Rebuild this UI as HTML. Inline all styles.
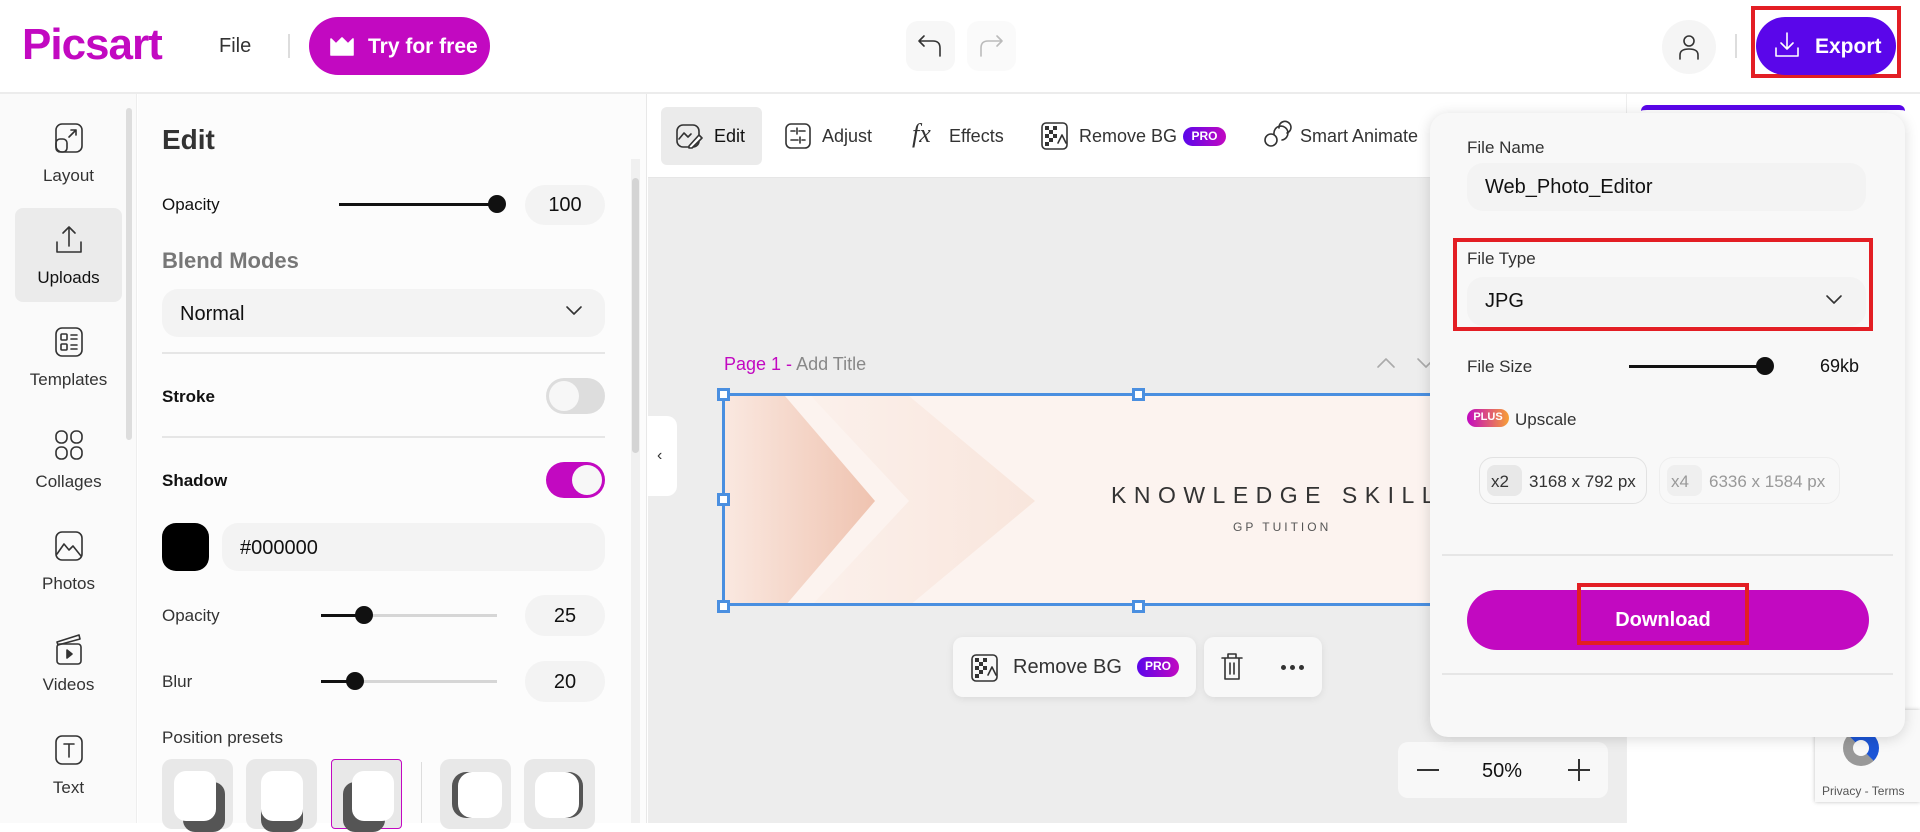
<!DOCTYPE html>
<html><head><meta charset="utf-8"><style>
*{box-sizing:border-box;margin:0;padding:0}
body{width:1920px;height:823px;overflow:hidden;background:#fff;font-family:"Liberation Sans",sans-serif;color:#111;position:relative}
.a{position:absolute}
.t{position:absolute;white-space:nowrap}
svg{position:absolute;fill:none;stroke:#333;stroke-width:1.6;stroke-linecap:round;stroke-linejoin:round}
.lab{font-size:17px;color:#333;text-align:center;width:137px;left:0}
.box{background:#f3f3f3;border-radius:20px}
</style></head><body>
<!-- header -->
<div class="a" style="left:0;top:92px;width:1920px;height:2px;background:#ececec"></div>
<div class="t" style="left:22px;top:20px;font-size:44px;font-weight:bold;color:#c209c1;letter-spacing:-1px">Picsart</div>
<div class="t" style="left:219px;top:35px;font-size:20px;color:#333">File</div>
<div class="a" style="left:288px;top:34px;width:2px;height:24px;background:#ddd"></div>
<div class="a" style="left:309px;top:17px;width:181px;height:58px;border-radius:29px;background:#c209c1"></div>
<svg style="left:329px;top:35px" width="26" height="22" viewBox="0 0 26 22"><path d="M2 4 L7 9 L13 3 L19 9 L24 4 V20 H2Z" fill="#fff" stroke="#fff"/></svg>
<div class="t" style="left:368px;top:35px;font-size:21px;font-weight:bold;color:#fff">Try for free</div>
<div class="a" style="left:906px;top:21px;width:49px;height:50px;border-radius:12px;background:#f7f7f7"></div>
<svg style="left:916px;top:32px" width="28" height="28" viewBox="0 0 28 28"><path d="M8 4 L3 9 L8 14 M3 9 H17 Q24 9 24 16 V24"/></svg>
<div class="a" style="left:967px;top:21px;width:49px;height:50px;border-radius:12px;background:#fafafa"></div>
<svg style="left:977px;top:32px" width="28" height="28" viewBox="0 0 28 28"><path d="M20 4 L25 9 L20 14 M25 9 H11 Q4 9 4 16 V24" stroke="#bbb"/></svg>
<div class="a" style="left:1662px;top:20px;width:54px;height:54px;border-radius:50%;background:#f5f5f5"></div>
<svg style="left:1677px;top:33px" width="24" height="28" viewBox="0 0 24 28"><circle cx="12" cy="8" r="5"/><path d="M3 26 V22 Q3 16 12 16 Q21 16 21 22 V26"/></svg>
<div class="a" style="left:1735px;top:34px;width:2px;height:24px;background:#ddd"></div>
<div class="a" style="left:1751px;top:6px;width:150px;height:72px;border:4px solid #e31e24"></div>
<div class="a" style="left:1756px;top:17px;width:140px;height:58px;border-radius:29px;background:#5a06ea"></div>
<svg style="left:1773px;top:30px" width="28" height="30" viewBox="0 0 28 30" ><path d="M14 3 V19 M8 13 L14 19 L20 13 M3 18 V26 H25 V18" stroke="#fff"/></svg>
<div class="t" style="left:1815px;top:35px;font-size:21px;font-weight:bold;color:#fff">Export</div>

<!-- left sidebar -->
<div class="a" style="left:0;top:94px;width:137px;height:729px;background:#fafafa;border-right:1px solid #eee"></div>
<div class="a" style="left:126px;top:108px;width:6px;height:332px;border-radius:3px;background:#ddd"></div>
<svg style="left:54px;top:122px" width="30" height="32" viewBox="0 0 30 32"><rect x="2" y="2" width="26" height="28" rx="6"/><rect x="2" y="17" width="11" height="13" rx="4"/><path d="M15 15 L22 8 M17 8 H22 V13"/></svg>
<div class="t lab" style="top:166px">Layout</div>
<div class="a" style="left:15px;top:208px;width:107px;height:94px;border-radius:8px;background:#ebebeb"></div>
<svg style="left:54px;top:224px" width="30" height="32" viewBox="0 0 30 32"><path d="M15 3 V22 M9 9 L15 3 L21 9 M3 18 V28 H27 V18"/></svg>
<div class="t lab" style="top:268px;color:#111">Uploads</div>
<svg style="left:54px;top:326px" width="30" height="32" viewBox="0 0 30 32"><rect x="2" y="2" width="26" height="28" rx="6"/><rect x="7" y="8" width="6" height="6" rx="1"/><rect x="7" y="18" width="6" height="6" rx="1"/><path d="M17 9 H23 M17 13 H23 M17 19 H23 M17 23 H23"/></svg>
<div class="t lab" style="top:370px">Templates</div>
<svg style="left:54px;top:429px" width="30" height="32" viewBox="0 0 30 32"><rect x="2" y="2" width="11" height="12" rx="5"/><rect x="17" y="2" width="11" height="12" rx="5"/><rect x="2" y="18" width="11" height="12" rx="5"/><rect x="17" y="18" width="11" height="12" rx="5"/></svg>
<div class="t lab" style="top:472px">Collages</div>
<svg style="left:54px;top:530px" width="30" height="32" viewBox="0 0 30 32"><rect x="2" y="2" width="26" height="28" rx="6"/><path d="M3 24 L10 14 L15 20 L19 16 L27 26"/></svg>
<div class="t lab" style="top:574px">Photos</div>
<svg style="left:54px;top:632px" width="30" height="34" viewBox="0 0 30 34"><rect x="3" y="12" width="24" height="20" rx="3"/><path d="M3 10 L25 3 L26 7 L4 13Z"/><path d="M13 18 L18 22 L13 26Z" fill="#333"/></svg>
<div class="t lab" style="top:675px">Videos</div>
<svg style="left:54px;top:734px" width="30" height="32" viewBox="0 0 30 32"><rect x="2" y="2" width="26" height="28" rx="6"/><path d="M10 10 H20 M15 10 V23"/></svg>
<div class="t lab" style="top:778px">Text</div>

<!-- edit panel -->
<div class="a" style="left:138px;top:94px;width:509px;height:729px;background:#fcfcfc;border-right:1px solid #e8e8e8"></div>
<div class="a" style="left:631px;top:159px;width:9px;height:664px;background:#f0f0f0"></div>
<div class="a" style="left:632px;top:178px;width:7px;height:275px;border-radius:4px;background:#d4d4d4"></div>
<div class="t" style="left:162px;top:124px;font-size:28px;font-weight:bold;color:#333">Edit</div>
<div class="t" style="left:162px;top:195px;font-size:17px">Opacity</div>
<div class="a" style="left:339px;top:203px;width:158px;height:3px;background:#111"></div>
<div class="a" style="left:488px;top:195px;width:18px;height:18px;border-radius:50%;background:#111"></div>
<div class="a box" style="left:525px;top:185px;width:80px;height:40px"></div>
<div class="t" style="left:525px;top:194px;width:80px;text-align:center;font-size:20px">100</div>
<div class="t" style="left:162px;top:248px;font-size:22px;font-weight:bold;color:#777">Blend Modes</div>
<div class="a box" style="left:162px;top:289px;width:443px;height:48px;border-radius:16px"></div>
<div class="t" style="left:180px;top:303px;font-size:20px">Normal</div>
<svg style="left:564px;top:304px" width="20" height="14" viewBox="0 0 20 14"><path d="M3 3 L10 10 L17 3"/></svg>
<div class="a" style="left:162px;top:352px;width:443px;height:2px;background:#e6e6e6"></div>
<div class="t" style="left:162px;top:387px;font-size:17px;font-weight:bold">Stroke</div>
<div class="a" style="left:546px;top:378px;width:59px;height:36px;border-radius:18px;background:#ddd"></div>
<div class="a" style="left:549px;top:381px;width:30px;height:30px;border-radius:50%;background:#f7f7f7"></div>
<div class="a" style="left:162px;top:436px;width:443px;height:2px;background:#e6e6e6"></div>
<div class="t" style="left:162px;top:471px;font-size:17px;font-weight:bold">Shadow</div>
<div class="a" style="left:546px;top:462px;width:59px;height:36px;border-radius:18px;background:#c209c1"></div>
<div class="a" style="left:572px;top:465px;width:30px;height:30px;border-radius:50%;background:#f7f7f7"></div>
<div class="a" style="left:162px;top:523px;width:47px;height:48px;border-radius:14px;background:#000"></div>
<div class="a box" style="left:222px;top:523px;width:383px;height:48px;border-radius:16px"></div>
<div class="t" style="left:240px;top:537px;font-size:20px">#000000</div>
<div class="t" style="left:162px;top:606px;font-size:17px;color:#333">Opacity</div>
<div class="a" style="left:321px;top:614px;width:176px;height:3px;background:#d6d6d6"></div>
<div class="a" style="left:321px;top:614px;width:43px;height:3px;background:#111"></div>
<div class="a" style="left:355px;top:606px;width:18px;height:18px;border-radius:50%;background:#111"></div>
<div class="a box" style="left:525px;top:595px;width:80px;height:41px"></div>
<div class="t" style="left:525px;top:605px;width:80px;text-align:center;font-size:20px">25</div>
<div class="t" style="left:162px;top:672px;font-size:17px;color:#333">Blur</div>
<div class="a" style="left:321px;top:680px;width:176px;height:3px;background:#d6d6d6"></div>
<div class="a" style="left:321px;top:680px;width:34px;height:3px;background:#111"></div>
<div class="a" style="left:346px;top:672px;width:18px;height:18px;border-radius:50%;background:#111"></div>
<div class="a box" style="left:525px;top:661px;width:80px;height:41px"></div>
<div class="t" style="left:525px;top:671px;width:80px;text-align:center;font-size:20px">20</div>
<div class="t" style="left:162px;top:728px;font-size:17px;color:#333">Position presets</div>
<div class="a" style="left:162px;top:759px;width:71px;height:70px;border-radius:10px;background:#e8e8e8"></div>
<div class="a" style="left:183px;top:782px;width:42px;height:50px;border-radius:12px;background:#555"></div>
<div class="a" style="left:174px;top:771px;width:42px;height:50px;border-radius:12px;background:#fff"></div>
<div class="a" style="left:246px;top:759px;width:71px;height:70px;border-radius:10px;background:#e8e8e8"></div>
<div class="a" style="left:261px;top:782px;width:42px;height:50px;border-radius:12px;background:#555"></div>
<div class="a" style="left:261px;top:771px;width:42px;height:50px;border-radius:12px;background:#fff"></div>
<div class="a" style="left:331px;top:759px;width:71px;height:70px;border-radius:4px;background:#e8e8e8;border:1px solid #c209c1"></div>
<div class="a" style="left:343px;top:782px;width:42px;height:50px;border-radius:12px;background:#555"></div>
<div class="a" style="left:352px;top:771px;width:42px;height:50px;border-radius:12px;background:#fff"></div>
<div class="a" style="left:421px;top:762px;width:1px;height:61px;background:#ddd"></div>
<div class="a" style="left:440px;top:759px;width:71px;height:70px;border-radius:10px;background:#e8e8e8"></div>
<div class="a" style="left:452px;top:772px;width:46px;height:46px;border-radius:14px;background:#555"></div>
<div class="a" style="left:458px;top:772px;width:44px;height:46px;border-radius:14px;background:#fff"></div>
<div class="a" style="left:524px;top:759px;width:71px;height:70px;border-radius:10px;background:#e8e8e8"></div>
<div class="a" style="left:537px;top:772px;width:46px;height:46px;border-radius:14px;background:#555"></div>
<div class="a" style="left:535px;top:772px;width:44px;height:46px;border-radius:14px;background:#fff"></div>

<!-- canvas area -->
<div class="a" style="left:648px;top:94px;width:978px;height:729px;background:#ededed"></div>
<div class="a" style="left:648px;top:94px;width:978px;height:84px;background:#fff;border-bottom:1px solid #e6e6e6"></div>
<div class="a" style="left:661px;top:107px;width:101px;height:58px;border-radius:6px;background:#ebebeb"></div>
<svg style="left:675px;top:122px" width="28" height="28" viewBox="0 0 28 28"><rect x="2" y="3" width="22" height="22" rx="6"/><path d="M4 17 L9 11 L13 15 L16 12" /><path d="M14 24 L24 13 L27 16 L17 26 H14Z" fill="#fff"/></svg>
<div class="t" style="left:714px;top:126px;font-size:18px;color:#111">Edit</div>
<svg style="left:784px;top:122px" width="28" height="28" viewBox="0 0 28 28"><rect x="2" y="2" width="24" height="24" rx="5"/><path d="M7 9 H11 M15 9 H21 M13 6 V12 M7 18 H14 M18 18 H21 M16 15 V21"/></svg>
<div class="t" style="left:822px;top:126px;font-size:18px;color:#333">Adjust</div>
<div class="t" style="left:912px;top:119px;font-size:26px;font-style:italic;font-family:'Liberation Serif',serif;color:#333">fx</div>
<div class="t" style="left:949px;top:126px;font-size:18px;color:#333">Effects</div>
<svg style="left:1040px;top:121px" width="30" height="30" viewBox="0 0 30 30"><rect x="2" y="2" width="25" height="26" rx="4"/><path d="M5 5 H9 V9 H5Z M13 5 H17 V9 H13Z M9 9 H13 V13 H9Z M5 13 H9 V17 H5Z M13 13 H17 V17 H13Z M9 17 H13 V21 H9Z M5 21 H9 V25 H5Z" fill="#333" stroke="none"/><path d="M18 22 L22 14 L26 22"/></svg>
<div class="t" style="left:1079px;top:126px;font-size:18px;color:#333">Remove BG</div>
<div class="a" style="left:1183px;top:127px;width:43px;height:19px;border-radius:10px;background:linear-gradient(90deg,#5a06ea,#c209c1)"></div>
<div class="t" style="left:1183px;top:129px;width:43px;text-align:center;font-size:12px;font-weight:bold;color:#fff">PRO</div>
<svg style="left:1262px;top:120px" width="30" height="30" viewBox="0 0 30 30"><circle cx="9" cy="20" r="6"/><path d="M12 14 A7 7 0 1 1 20 20"/><path d="M17 8 A6 6 0 1 1 25 13"/></svg>
<div class="t" style="left:1300px;top:126px;font-size:18px;color:#333">Smart Animate</div>

<!-- right panel -->
<div class="a" style="left:1626px;top:94px;width:294px;height:729px;background:#fff;border-left:1px solid #eee"></div>
<div class="a" style="left:1641px;top:105px;width:264px;height:20px;border-radius:6px;border-top:5px solid #5a06ea"></div>

<div class="a" style="left:648px;top:416px;width:29px;height:80px;background:#fff;border-radius:0 10px 10px 0"></div>
<div class="t" style="left:657px;top:447px;font-size:16px;color:#333">‹</div>

<div class="t" style="left:724px;top:354px;font-size:18px;color:#c209c1">Page 1 - <span style="color:#888">Add Title</span></div>
<svg style="left:1376px;top:355px" width="60" height="16" viewBox="0 0 60 16"><path d="M2 12 L10 4 L18 12" stroke="#aaa"/><path d="M42 4 L50 12 L58 4" stroke="#aaa"/></svg>

<div class="a" style="left:722px;top:393px;width:720px;height:213px;background:#fcf3ef;overflow:hidden;border:3px solid #4a8fe0">
  <div class="a" style="left:0;top:0;width:150px;height:210px;background:linear-gradient(90deg,#fae8e0,#efc3b0);clip-path:polygon(0 0,40% 0,100% 50%,40% 100%,0 100%)"></div>
  <div class="a" style="left:30px;top:0;width:280px;height:210px;background:linear-gradient(90deg,rgba(246,220,208,.0),rgba(248,228,218,.9));clip-path:polygon(20% 0,55% 0,100% 50%,55% 100%,20% 100%,55% 50%)"></div>
  <div class="t" style="left:386px;top:86px;font-size:23px;letter-spacing:7.5px;color:#333">KNOWLEDGE SKILLS</div>
  <div class="t" style="left:508px;top:124px;font-size:12px;letter-spacing:3px;color:#555">GP TUITION</div>
</div>
<div class="a" style="left:717px;top:388px;width:13px;height:13px;background:#fff;border:3px solid #4a8fe0"></div>
<div class="a" style="left:1132px;top:388px;width:13px;height:13px;background:#fff;border:3px solid #4a8fe0"></div>
<div class="a" style="left:717px;top:493px;width:13px;height:13px;background:#fff;border:3px solid #4a8fe0"></div>
<div class="a" style="left:717px;top:600px;width:13px;height:13px;background:#fff;border:3px solid #4a8fe0"></div>
<div class="a" style="left:1132px;top:600px;width:13px;height:13px;background:#fff;border:3px solid #4a8fe0"></div>

<div class="a" style="left:953px;top:637px;width:243px;height:60px;border-radius:10px;background:#f8f8f8;box-shadow:0 2px 8px rgba(0,0,0,.08)"></div>
<svg style="left:970px;top:653px" width="30" height="30" viewBox="0 0 30 30"><rect x="2" y="2" width="25" height="26" rx="4"/><path d="M5 5 H9 V9 H5Z M13 5 H17 V9 H13Z M9 9 H13 V13 H9Z M5 13 H9 V17 H5Z M13 13 H17 V17 H13Z M9 17 H13 V21 H9Z M5 21 H9 V25 H5Z" fill="#333" stroke="none"/><path d="M18 22 L22 14 L26 22"/></svg>
<div class="t" style="left:1013px;top:656px;font-size:20px;color:#333">Remove BG</div>
<div class="a" style="left:1137px;top:657px;width:42px;height:20px;border-radius:10px;background:linear-gradient(90deg,#5a06ea,#c209c1)"></div>
<div class="t" style="left:1137px;top:659px;width:42px;text-align:center;font-size:12px;font-weight:bold;color:#fff">PRO</div>
<div class="a" style="left:1204px;top:637px;width:118px;height:60px;border-radius:10px;background:#f8f8f8;box-shadow:0 2px 8px rgba(0,0,0,.08)"></div>
<svg style="left:1220px;top:652px" width="24" height="30" viewBox="0 0 24 30"><path d="M2 6 H22 M8 6 V2 H16 V6 M5 6 V27 H19 V6 M10 11 V22 M14 11 V22"/></svg>
<div class="a" style="left:1281px;top:665px;width:5px;height:5px;border-radius:50%;background:#333"></div>
<div class="a" style="left:1290px;top:665px;width:5px;height:5px;border-radius:50%;background:#333"></div>
<div class="a" style="left:1299px;top:665px;width:5px;height:5px;border-radius:50%;background:#333"></div>

<div class="a" style="left:1398px;top:742px;width:210px;height:56px;border-radius:10px;background:#f8f8f8"></div>
<div class="a" style="left:1417px;top:769px;width:22px;height:2px;background:#333"></div>
<div class="t" style="left:1482px;top:760px;font-size:20px">50%</div>
<div class="a" style="left:1568px;top:769px;width:22px;height:2px;background:#333"></div>
<div class="a" style="left:1578px;top:759px;width:2px;height:22px;background:#333"></div>

<div class="a" style="left:1815px;top:710px;width:105px;height:92px;background:#f9f9f9;box-shadow:0 0 4px rgba(0,0,0,.25)"></div>
<div class="a" style="left:1843px;top:730px;width:36px;height:36px;border-radius:50%;border:10px solid #999;border-top-color:#1c55d6;border-right-color:#1c55d6"></div>
<div class="t" style="left:1822px;top:784px;font-size:12px;color:#555">Privacy - Terms</div>

<!-- popup -->
<div class="a" style="left:1430px;top:113px;width:475px;height:624px;border-radius:18px;background:#f8f8f8;box-shadow:0 2px 14px rgba(0,0,0,.15)"></div>
<div class="t" style="left:1467px;top:138px;font-size:17px;color:#333">File Name</div>
<div class="a box" style="left:1467px;top:163px;width:399px;height:48px;border-radius:16px"></div>
<div class="t" style="left:1485px;top:176px;font-size:20px">Web_Photo_Editor</div>
<div class="a" style="left:1453px;top:238px;width:420px;height:93px;border:4px solid #e31e24"></div>
<div class="t" style="left:1467px;top:249px;font-size:17px;color:#333">File Type</div>
<div class="a box" style="left:1467px;top:277px;width:399px;height:49px;border-radius:16px"></div>
<div class="t" style="left:1485px;top:290px;font-size:20px">JPG</div>
<svg style="left:1824px;top:293px" width="20" height="14" viewBox="0 0 20 14"><path d="M3 3 L10 10 L17 3"/></svg>
<div class="t" style="left:1467px;top:357px;font-size:17px;color:#333">File Size</div>
<div class="a" style="left:1629px;top:365px;width:136px;height:3px;background:#111"></div>
<div class="a" style="left:1756px;top:357px;width:18px;height:18px;border-radius:50%;background:#111"></div>
<div class="t" style="left:1820px;top:356px;font-size:18px">69kb</div>
<div class="a" style="left:1467px;top:409px;width:42px;height:18px;border-radius:9px;background:linear-gradient(90deg,#c209c1,#f7a035)"></div>
<div class="t" style="left:1467px;top:411px;width:42px;text-align:center;font-size:11px;font-weight:bold;color:#fff">PLUS</div>
<div class="t" style="left:1515px;top:410px;font-size:17px;color:#333">Upscale</div>
<div class="a" style="left:1479px;top:457px;width:168px;height:47px;border-radius:14px;border:1px solid #e2e2e2"></div>
<div class="a" style="left:1487px;top:465px;width:35px;height:31px;border-radius:8px;background:#e8e8e8"></div>
<div class="t" style="left:1491px;top:472px;font-size:17px;color:#333">x2</div>
<div class="t" style="left:1529px;top:472px;font-size:17px;color:#333">3168 x 792 px</div>
<div class="a" style="left:1659px;top:457px;width:181px;height:47px;border-radius:14px;border:1px solid #eee"></div>
<div class="a" style="left:1667px;top:465px;width:35px;height:31px;border-radius:8px;background:#efefef"></div>
<div class="t" style="left:1671px;top:472px;font-size:17px;color:#999">x4</div>
<div class="t" style="left:1709px;top:472px;font-size:17px;color:#999">6336 x 1584 px</div>
<div class="a" style="left:1442px;top:554px;width:451px;height:2px;background:#e6e6e6"></div>
<div class="a" style="left:1467px;top:590px;width:402px;height:60px;border-radius:30px;background:#c209c1"></div>
<div class="a" style="left:1577px;top:583px;width:172px;height:62px;border:4px solid #e31e24"></div>
<div class="t" style="left:1577px;top:609px;width:172px;text-align:center;font-size:20px;font-weight:bold;color:#fff">Download</div>
<div class="a" style="left:1442px;top:673px;width:451px;height:2px;background:#e6e6e6"></div>
</body></html>
